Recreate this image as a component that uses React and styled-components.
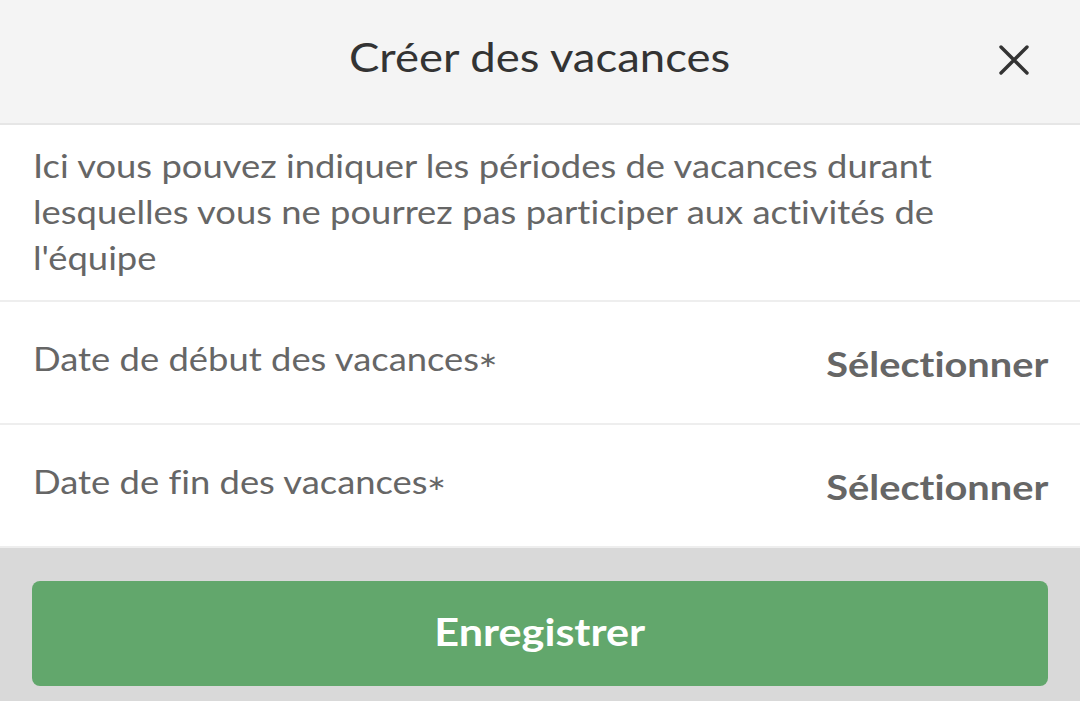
import React from "react";
import styled, { createGlobalStyle } from "styled-components";

// the reference is drawn a little wider than Lato's natural width
const STRETCH = 1.137;

const GlobalStyle = createGlobalStyle`
  html, body {
    margin: 0;
    padding: 0;
    background: #ffffff;
    font-family: Lato, "Noto Sans", sans-serif;
    font-variant-ligatures: none;
  }
`;

function CloseIcon() {
  return (
    <svg width="30" height="30" viewBox="0 0 30 30">
      <path d="M2 2 L28 28 M28 2 L2 28" stroke="#333333" strokeWidth="3.4" strokeLinecap="round" fill="none" />
    </svg>
  );
}

function DateRow({ label }) {
  return (
    <Row>
      <Label>
        {label}
        <Star>∗</Star>
      </Label>
      <Select>Sélectionner</Select>
    </Row>
  );
}

function App() {
  return (
    <Page>
      <GlobalStyle />
      <Header>
        <Title>Créer des vacances</Title>
        <CloseButton>
          <CloseIcon />
        </CloseButton>
      </Header>
      <Description>
        <DescriptionText>
          Ici vous pouvez indiquer les périodes de vacances durant lesquelles vous ne pourrez pas participer aux activités de l'équipe
        </DescriptionText>
      </Description>
      <DateRow label="Date de début des vacances" />
      <DateRow label="Date de fin des vacances" />
      <Footer>
        <SaveButton>
          <ButtonText>Enregistrer</ButtonText>
        </SaveButton>
      </Footer>
    </Page>
  );
}

const Page = styled.div`
  height: 701px;
  display: flex;
  flex-direction: column;
  overflow: hidden;
`;

const Header = styled.div`
  position: relative;
  height: 123px;
  flex-shrink: 0;
  background: #f4f4f4;
  border-bottom: 2px solid #e6e6e6;
  display: flex;
  align-items: center;
  justify-content: center;
`;

const Title = styled.h1`
  margin: 0 0 10px 0;
  font-size: 40px;
  font-weight: 400;
  color: #333333;
  transform: scaleX(${STRETCH});
`;

const CloseButton = styled.div`
  position: absolute;
  right: 51px;
  top: 45px;
  width: 30px;
  height: 30px;
  display: flex;
`;

const Description = styled.div`
  padding: 18px 33px 19px 33px;
  border-bottom: 2px solid #eeeeee;
`;

const DescriptionText = styled.p`
  margin: 0;
  width: 885px;
  font-size: 32px;
  line-height: 46px;
  color: #666666;
  transform: scaleX(${STRETCH});
  transform-origin: left center;
`;

const Row = styled.div`
  height: 121px;
  flex-shrink: 0;
  padding: 0 32px 0 33px;
  display: flex;
  align-items: center;
  justify-content: space-between;
  border-bottom: 2px solid #eeeeee;
`;

const Label = styled.span`
  display: inline-block;
  font-size: 32px;
  color: #666666;
  margin-bottom: 8px;
  transform: scaleX(${STRETCH});
  transform-origin: left center;
`;

const Star = styled.span`
  font-family: "DejaVu Sans", sans-serif;
  font-size: 21px;
  margin-left: -1px;
  vertical-align: 4px;
`;

const Select = styled.span`
  display: inline-block;
  font-size: 35px;
  font-weight: 700;
  color: #666666;
  transform: scaleX(${STRETCH});
  transform-origin: right center;
`;

const Footer = styled.div`
  flex: 1;
  background: #d9d9d9;
  padding: 33px 32px 0 32px;
`;

const SaveButton = styled.button`
  width: 100%;
  height: 105px;
  border: none;
  border-radius: 8px;
  background: #62a76c;
  padding: 0 0 6px 0;
  display: flex;
  align-items: center;
  justify-content: center;
`;

const ButtonText = styled.span`
  display: inline-block;
  color: #ffffff;
  font-family: Lato, "Noto Sans", sans-serif;
  font-size: 38px;
  font-weight: 700;
  transform: scaleX(${STRETCH});
`;

export default App;
